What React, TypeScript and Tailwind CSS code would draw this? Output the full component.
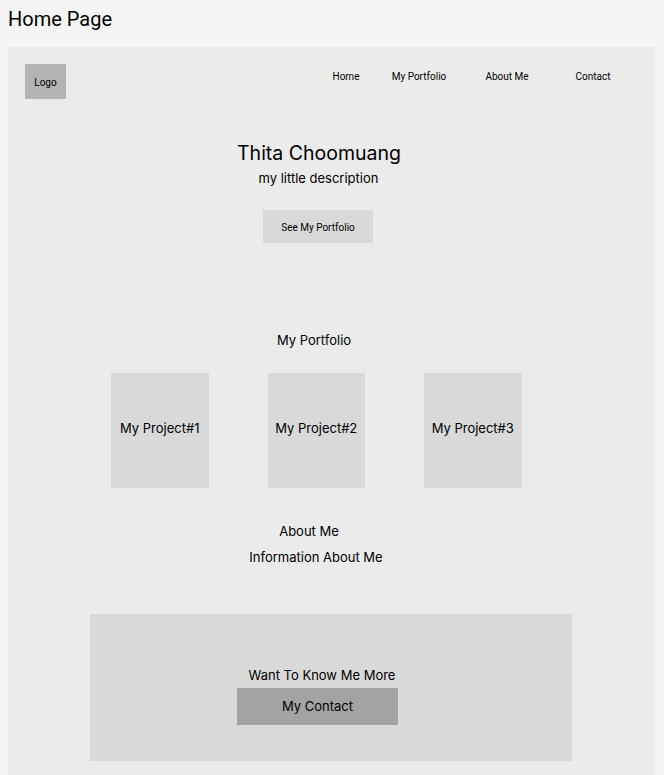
import React from 'react';

const inter = { fontFamily: 'Inter, "Noto Sans", sans-serif' };

const App = () => {
  const navItems = [
    { label: 'Home', w: 'w-[60px]' },
    { label: 'My Portfolio', w: 'w-[86px]' },
    { label: 'About Me', w: 'w-[90px]' },
    { label: 'Contact', w: 'w-[82px]' },
  ];
  const projects = ['My Project#1', 'My Project#2', 'My Project#3'];

  return (
    <div className="min-h-screen bg-[#f5f5f5] text-black overflow-hidden font-['Roboto',sans-serif]">
      {/* Frame label */}
      <div className="h-[47px] pl-2 pt-[7px] text-[20px] leading-[24px]">Home Page</div>

      {/* Page frame */}
      <div className="ml-2 w-[647px] bg-[#ebebeb] pb-[14px]">
        {/* Header */}
        <div className="flex pt-[17px] pl-[17px]">
          <div className="w-[41px] h-[35px] bg-[#b3b3b3] flex items-center justify-center text-[10px] pt-[1px]">Logo</div>
          <nav className="flex ml-[250px] mt-[7px]">
            {navItems.map((n) => (
              <div key={n.label} className={`${n.w} text-center text-[10px] leading-[12px]`}>
                {n.label}
              </div>
            ))}
          </nav>
        </div>

        <div style={inter}>
          {/* Hero */}
          <div className="flex justify-center pr-[25px] mt-[42px] text-[19.5px] leading-[24px]">Thita Choomuang</div>
          <div className="flex justify-center pr-[26px] mt-[5px] text-[13px] leading-[17px]">my little description</div>
          <div className="flex justify-center pr-[27px] mt-[23px]">
            <button className="w-[110px] h-[33px] bg-[#d9d9d9] text-[10px] font-['Roboto',sans-serif] pt-[1px]">See My Portfolio</button>
          </div>

          {/* Portfolio */}
          <div className="flex justify-center pr-[35px] mt-[89px] text-[13px] leading-[17px]">My Portfolio</div>
          <div className="flex gap-[59px] ml-[103px] mt-[24px]">
            {projects.map((p) => (
              <div key={p} className="w-[97.5px] h-[115px] bg-[#d9d9d9] flex items-center justify-center text-[13px] pb-[3px]">
                {p}
              </div>
            ))}
          </div>

          {/* About */}
          <div className="flex justify-center pr-[45px] mt-[35px] text-[13px] leading-[17px]">About Me</div>
          <div className="flex justify-center pr-[31px] mt-[9px] text-[13px] leading-[17px]">Information About Me</div>

          {/* Contact */}
          <div className="ml-[82px] w-[482px] h-[147px] bg-[#d9d9d9] mt-[48px] pt-[53px]">
            <div className="flex justify-center pr-[18px] text-[13px] leading-[17px]">Want To Know Me More</div>
            <div className="ml-[147px] mt-[4px] w-[161px] h-[37px] bg-[#a3a3a3] flex items-center justify-center text-[13px] pt-[1px]">
              My Contact
            </div>
          </div>
        </div>
      </div>
    </div>
  );
};

export default App;
